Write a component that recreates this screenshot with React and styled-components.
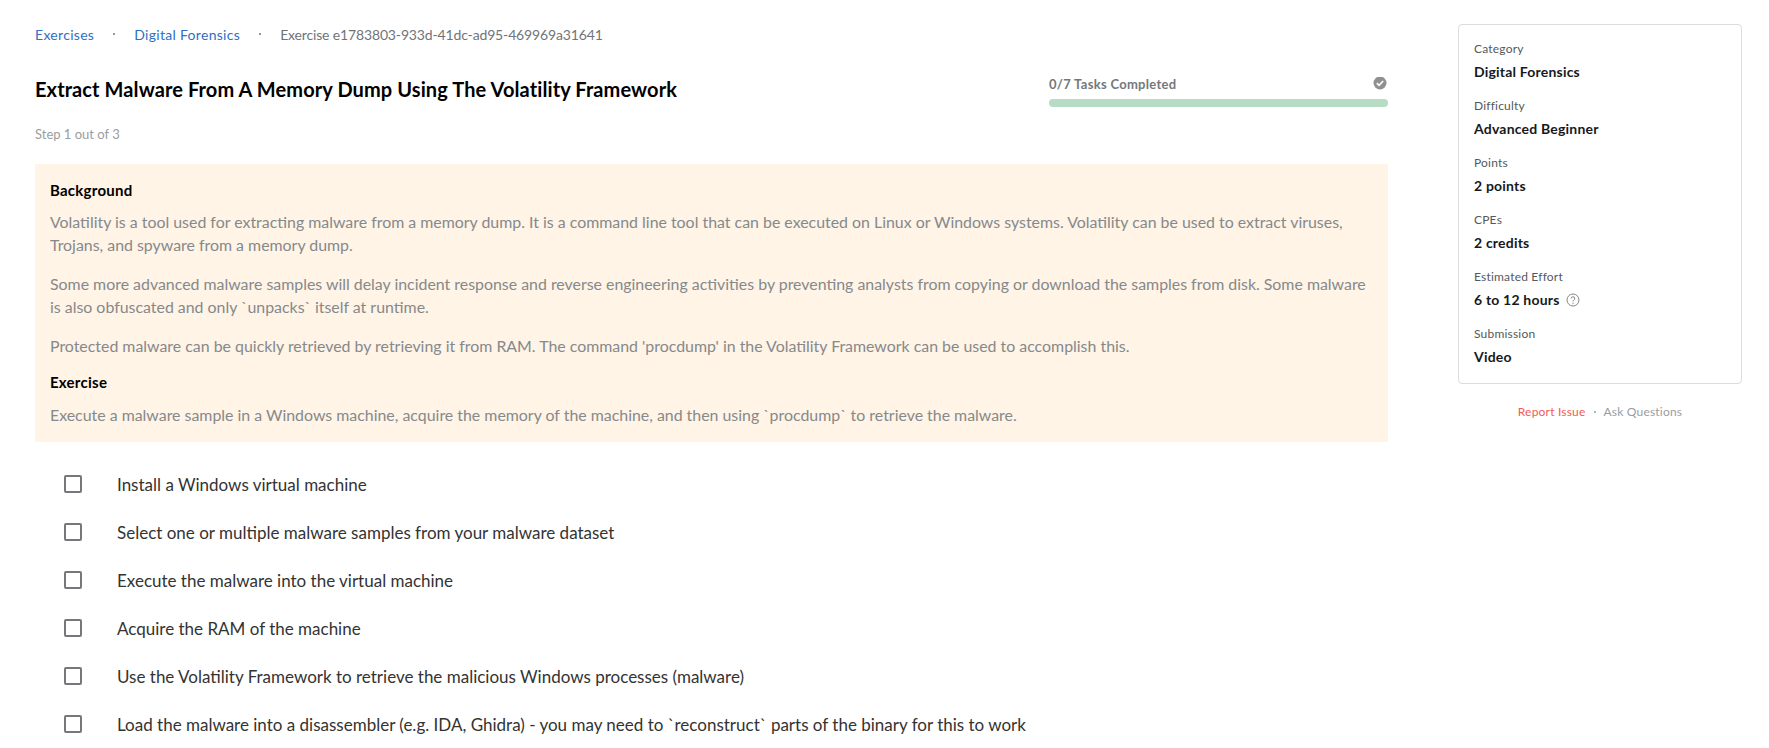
import React from 'react';
import styled, { createGlobalStyle } from 'styled-components';

const GlobalStyle = createGlobalStyle`
  html, body {
    margin: 0;
    padding: 0;
    height: 748px;
    overflow: hidden;
    background: #fff;
    font-family: "Lato", "Liberation Sans", sans-serif;
  }
`

const Page = styled.div`
  display: flex;
  align-items: flex-start;
  padding: 0 27px 0 35px;
  height: 748px;
  overflow: hidden;
`

// ------------------------------------------

const Main = styled.div`
  width: 1353px;
  flex-shrink: 0;
`

const Breadcrumbs = styled.div`
  display: flex;
  align-items: center;
  height: 20px;
  margin-top: 24px;
  font-size: 14px;
`

const Crumb = styled.a`
  color: ${(p) => (p.$current ? '#6f7479' : '#2f6fc4')};
  letter-spacing: ${(p) => (p.$current ? '-0.15px' : '0.3px')};
`

const Dot = styled.span`
  width: 2px;
  height: 2px;
  border-radius: 50%;
  background: #6f7479;
  margin: 0 19px;
`

const TitleRow = styled.div`
  display: flex;
  justify-content: space-between;
  margin-top: 24px;
  height: 44px;
`

const Title = styled.h1`
  margin: 0;
  font-size: 20px;
  font-weight: 700;
  line-height: 42px;
  letter-spacing: 0.1px;
  color: #000;
`

const Progress = styled.div`
  width: 339px;
  padding-top: 8px;
`

const ProgressHead = styled.div`
  display: flex;
  align-items: center;
  justify-content: space-between;
  height: 16px;
  padding-right: 1px;
  font-size: 13px;
  font-weight: 700;
  letter-spacing: 0.3px;
  color: #74787c;
`

const ProgressBar = styled.div`
  height: 8px;
  margin-top: 7px;
  border-radius: 4px;
  background: #b8dcc3;
`

const Step = styled.div`
  margin-top: 12px;
  font-size: 13px;
  line-height: 20px;
  color: #9a9d9f;
`

// ---------------------------------------------

const Panel = styled.div`
  margin-top: 20px;
  height: 278px;
  box-sizing: border-box;
  padding: 16px 15px 0;
  background: #fff4e6;
`

const PanelHeading = styled.h3`
  margin: ${(p) => p.$top || 0}px 0 0;
  font-size: 15px;
  font-weight: 700;
  line-height: 20px;
  letter-spacing: 0.25px;
  color: #000;
`

const PanelText = styled.p`
  margin: ${(p) => p.$top}px 0 0;
  font-size: 15.9px;
  line-height: 23px;
  color: #85898c;
`

// ------------------------------------

const TaskList = styled.div`
  margin-top: 18px;
`

const Task = styled.label`
  display: flex;
  align-items: center;
  height: 48px;
  padding-left: 29px;
`

const Box = styled.span`
  width: 18px;
  height: 18px;
  box-sizing: border-box;
  flex-shrink: 0;
  border: 2px solid #75777a;
  border-radius: 2px;
  margin-right: 35px;
`

const TaskText = styled.span`
  font-size: 17px;
  color: #333;
`

// ---------------------------

const Side = styled.div`
  width: 285px;
  margin-left: 70px;
  margin-top: 24px;
`

const Card = styled.div`
  box-sizing: border-box;
  height: 360px;
  padding: 14px 15px 0;
  border: 1px solid #dcdcdc;
  border-radius: 4px;
`

const Info = styled.div`
  height: 57px;
`

const InfoLabel = styled.div`
  font-size: 12px;
  line-height: 20px;
  letter-spacing: 0.2px;
  color: #55595c;
`

const InfoValue = styled.div`
  display: flex;
  align-items: center;
  margin-top: 3px;
  font-size: 14px;
  font-weight: 700;
  line-height: 20px;
  letter-spacing: 0.2px;
  color: #16191c;
`

const SideLinks = styled.div`
  display: flex;
  justify-content: center;
  align-items: center;
  margin-top: 18px;
  font-size: 12px;
  line-height: 20px;
  letter-spacing: 0.2px;
`

const SideLink = styled.a`
  color: ${(p) => (p.$red ? '#f05a5a' : '#9a9d9f')};
`

const SideDot = styled.span`
  width: 2px;
  height: 2px;
  border-radius: 50%;
  background: #9a9d9f;
  margin: 0 8px;
`

const HelpWrap = styled.span`
  display: inline-flex;
  margin-left: 6px;
`

const CheckIcon = () => (
  <svg width="14" height="14" viewBox="0 0 14 14">
    <circle cx="7" cy="6" r="6.5" fill="#8f9091" />
    <path d="M3.8 6.2 L6 8.3 L10.2 4" fill="none" stroke="#fff" strokeWidth="1.6" />
  </svg>
)

const HelpIcon = () => (
  <HelpWrap>
    <svg width="14" height="14" viewBox="0 0 14 14">
      <circle cx="7" cy="7" r="6" fill="none" stroke="#77797c" strokeWidth="0.9" />
      <path d="M5.2 5.5 A1.8 1.8 0 1 1 7.6 7.2 Q7 7.5 7 8.4" fill="none" stroke="#77797c" strokeWidth="0.9" />
      <circle cx="7" cy="10.2" r="0.6" fill="#77797c" />
    </svg>
  </HelpWrap>
)

const tasks = [
  'Install a Windows virtual machine',
  'Select one or multiple malware samples from your malware dataset',
  'Execute the malware into the virtual machine',
  'Acquire the RAM of the machine',
  'Use the Volatility Framework to retrieve the malicious Windows processes (malware)',
  'Load the malware into a disassembler (e.g. IDA, Ghidra) - you may need to `reconstruct` parts of the binary for this to work',
]

const App = () => {
  return (
    <>
      <GlobalStyle />
      <Page>
        <Main>
          <Breadcrumbs>
            <Crumb>Exercises</Crumb>
            <Dot />
            <Crumb>Digital Forensics</Crumb>
            <Dot />
            <Crumb $current>Exercise e1783803-933d-41dc-ad95-469969a31641</Crumb>
          </Breadcrumbs>

          <TitleRow>
            <Title>Extract Malware From A Memory Dump Using The Volatility Framework</Title>
            <Progress>
              <ProgressHead>
                <span>0/7 Tasks Completed</span>
                <CheckIcon />
              </ProgressHead>
              <ProgressBar />
            </Progress>
          </TitleRow>

          <Step>Step 1 out of 3</Step>

          <Panel>
            <PanelHeading>Background</PanelHeading>
            <PanelText $top={10}>
              Volatility is a tool used for extracting malware from a memory dump. It is a command line tool that can be executed on Linux or Windows systems. Volatility can be used to extract viruses, Trojans, and spyware from a memory dump.
            </PanelText>
            <PanelText $top={16}>
              Some more advanced malware samples will delay incident response and reverse engineering activities by preventing analysts from copying or download the samples from disk. Some malware is also obfuscated and only `unpacks` itself at runtime.
            </PanelText>
            <PanelText $top={16}>
              Protected malware can be quickly retrieved by retrieving it from RAM. The command 'procdump' in the Volatility Framework can be used to accomplish this.
            </PanelText>
            <PanelHeading $top={15}>Exercise</PanelHeading>
            <PanelText $top={11}>
              Execute a malware sample in a Windows machine, acquire the memory of the machine, and then using `procdump` to retrieve the malware.
            </PanelText>
          </Panel>

          <TaskList>
            {tasks.map((t) => (
              <Task key={t}>
                <Box />
                <TaskText>{t}</TaskText>
              </Task>
            ))}
          </TaskList>
        </Main>

        <Side>
          <Card>
            <Info><InfoLabel>Category</InfoLabel><InfoValue>Digital Forensics</InfoValue></Info>
            <Info><InfoLabel>Difficulty</InfoLabel><InfoValue>Advanced Beginner</InfoValue></Info>
            <Info><InfoLabel>Points</InfoLabel><InfoValue>2 points</InfoValue></Info>
            <Info><InfoLabel>CPEs</InfoLabel><InfoValue>2 credits</InfoValue></Info>
            <Info><InfoLabel>Estimated Effort</InfoLabel><InfoValue>6 to 12 hours <HelpIcon /></InfoValue></Info>
            <Info><InfoLabel>Submission</InfoLabel><InfoValue>Video</InfoValue></Info>
          </Card>
          <SideLinks>
            <SideLink $red>Report Issue</SideLink>
            <SideDot />
            <SideLink>Ask Questions</SideLink>
          </SideLinks>
        </Side>
      </Page>
    </>
  );
};

export default App;
